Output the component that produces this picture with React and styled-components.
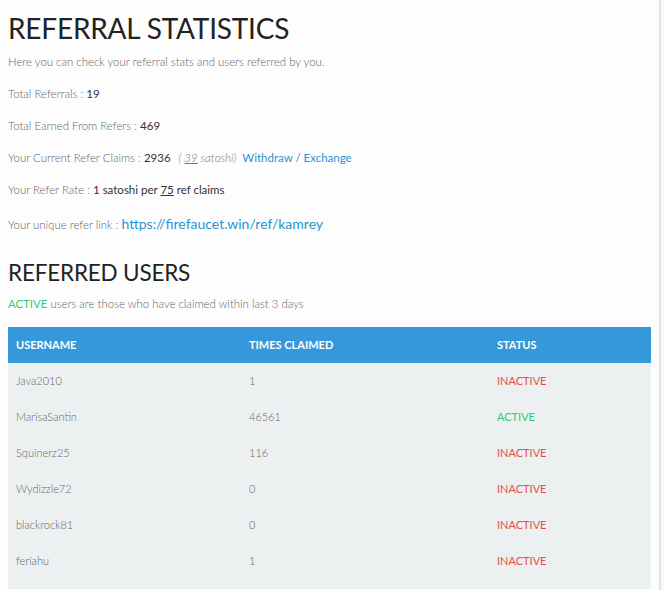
import React from 'react'
import styled, { createGlobalStyle } from 'styled-components'

const GlobalStyle = createGlobalStyle`
    html, body {
        margin: 0;
        padding: 0;
        background: #f8f8f8;
    }
    body {
        font-family: Lato, "Open Sans", sans-serif;
        -webkit-font-smoothing: antialiased;
    }
`;

const Page = styled.div`
    width: 643px;
    min-height: 590px;
    padding: 0 8px 0 8px;
    background: #fdfdfd;
    border-right: 2px solid #e6e2dc;
`;

const Title = styled.h1`
    margin: 0;
    padding: ${props => props.$pad || '11px 0 1px'};
    font-size: ${props => props.$size || '28px'};
    line-height: 34px;
    font-weight: 400;
    color: #222;
    letter-spacing: -0.2px;
`;

const Line = styled.div`
    height: ${props => props.$h || 32}px;
    line-height: ${props => props.$h || 32}px;
    font-size: 11.4px;
    font-weight: 300;
    color: #666;
    white-space: nowrap;
`;

const Value = styled.span`
    font-weight: 400;
    color: #333;
    font-size: 11.5px;
`;

const Under = styled.span`
    text-decoration: underline;
`;

const Muted = styled.span`
    font-style: italic;
    font-weight: 300;
    color: #777;
    margin-left: 8px;
    font-size: 11.5px;
`;

const Link = styled.a`
    color: #2b93d1;
    text-decoration: none;
    font-weight: 400;
    font-size: ${props => props.$size || '11.5px'};
    margin-left: ${props => props.$gap || '0'};
`;

const Green = styled.span`
    color: #2ecc71;
    font-weight: 400;
`;

const Table = styled.div`
    margin-top: 9px;
    background: #ecf0f1;
    padding-bottom: 10px;
`;

const Row = styled.div`
    display: grid;
    grid-template-columns: 233px 248px 1fr;
    height: 36px;
    align-items: center;
    background: ${props => props.$head ? '#3498db' : 'transparent'};
`;

const Cell = styled.div`
    padding-left: 8px;
    padding-bottom: ${props => props.$head ? '2px' : '1px'};
    font-size: 11px;
    font-weight: ${props => props.$head ? 700 : 300};
    color: ${props => props.$head ? '#fff' : '#666'};
    text-transform: ${props => props.$head ? 'uppercase' : 'none'};
`;

const Status = styled.div`
    padding-left: 8px;
    padding-bottom: 1px;
    font-size: 11px;
    font-weight: 400;
    color: ${props => props.$active ? '#2ecc71' : '#e0504a'};
`;

const users = [
    { name: 'Java2010', claimed: '1', active: false },
    { name: 'MarisaSantin', claimed: '46561', active: true },
    { name: 'Squinerz25', claimed: '116', active: false },
    { name: 'Wydizzle72', claimed: '0', active: false },
    { name: 'blackrock81', claimed: '0', active: false },
    { name: 'feriahu', claimed: '1', active: false },
];

const App = () => {
    return (
        <>
            <GlobalStyle />
            <Page>
                <Title>REFERRAL STATISTICS</Title>
                <Line>Here you can check your referral stats and users referred by you.</Line>
                <Line>Total Referrals : <Value>19</Value></Line>
                <Line>Total Earned From Refers : <Value>469</Value></Line>
                <Line>
                    Your Current Refer Claims : <Value>2936</Value>
                    <Muted>( <Under>39</Under> satoshi)</Muted>
                    <Link href="#" $gap="6px">Withdraw / Exchange</Link>
                </Line>
                <Line>Your Refer Rate : <Value>1 satoshi per <Under>75</Under> ref claims</Value></Line>
                <Line $h={36}>
                    Your unique refer link : <Link href="#" $size="14px">https://firefaucet.win/ref/kamrey</Link>
                </Line>

                <Title $size="22.5px" $pad="14px 0 0">REFERRED USERS</Title>
                <Line $h={28}><Green>ACTIVE</Green> users are those who have claimed within last 3 days</Line>

                <Table>
                    <Row $head>
                        <Cell $head>Username</Cell>
                        <Cell $head>Times Claimed</Cell>
                        <Cell $head>Status</Cell>
                    </Row>
                    {users.map(u => (
                        <Row key={u.name}>
                            <Cell>{u.name}</Cell>
                            <Cell>{u.claimed}</Cell>
                            <Status $active={u.active}>{u.active ? 'ACTIVE' : 'INACTIVE'}</Status>
                        </Row>
                    ))}
                </Table>
            </Page>
        </>
    )
}

export default App
